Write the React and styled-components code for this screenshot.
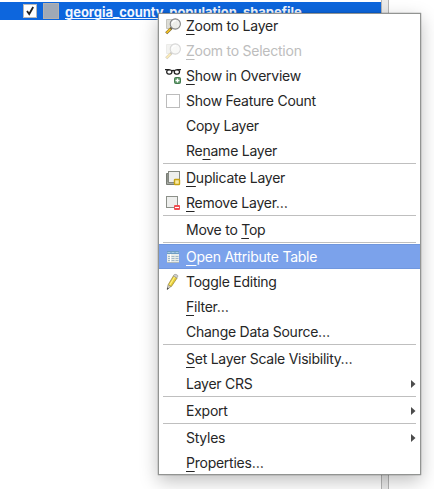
import React from "react";
import styled, { createGlobalStyle, css } from "styled-components";

const GlobalStyle = createGlobalStyle`
  * { box-sizing: border-box; }
  body { margin: 0; background: #fff; overflow: hidden; }
`;

const Screen = styled.main`
  position: relative;
  display: grid;
  grid-template-columns: 381px 8px 1fr;
  width: 434px;
  height: 489px;
  overflow: hidden;
  background: #fff;
  font-family: Inter, "Liberation Sans", sans-serif;
`;

const LayerPanel = styled.section`
  padding-top: 2px;
`;

const Splitter = styled.div`
  background: #ebebeb;
  border: solid #b5b5b5;
  border-width: 0 1px;
`;

const LayerRow = styled.div`
  display: flex;
  align-items: center;
  height: 18px;
  padding-left: 23px;
  background: #0d66dd;
`;

const LayerCheck = styled.span`
  display: flex;
  width: 14px;
  height: 14px;
  background: #fff;
  border: 1px solid #b9b9b9;
`;

const Swatch = styled.span`
  width: 16px;
  height: 16px;
  margin-left: 6px;
  background: #a0a9b6;
  border: 1px solid #b5b1ad;
`;

const LayerName = styled.span`
  margin-left: 6px;
  padding-top: 2px;
  color: #f2f7ff;
  font-size: 13px;
  font-weight: 700;
  line-height: 18px;
  letter-spacing: -0.03px;
  white-space: nowrap;
  text-decoration: underline;
  text-decoration-thickness: 1px;
  text-underline-offset: 1px;
  text-decoration-skip-ink: none;
`;

const Menu = styled.div`
  position: absolute;
  top: 13px;
  left: 158px;
  width: 263px;
  height: 462px;
  background: #fff;
  border: 1px solid #929492;
  box-shadow: 0 6px 17px rgba(0, 0, 0, 0.25), 0 0 1px rgba(0, 0, 0, 0.55);
`;

const Items = styled.div`
  display: flex;
  flex-direction: column;
  margin-top: -1px;
`;

const Item = styled.div`
  display: flex;
  align-items: center;
  height: 25px;
  padding: 0 5px 0 6px;
  color: #262626;
  font-size: 14px;
  line-height: 25px;
  letter-spacing: -0.25px;
  ${(p) => p.$disabled && css`color: #bdbdbd;`}
  ${(p) => p.$active && css`
    color: #fff;
    background: #7ba2eb;
    border: solid #7097de;
    border-width: 1px 0;
  `}
`;

const IconSlot = styled.span`
  display: flex;
  flex: 0 0 21px;
  height: 18px;
  opacity: ${(p) => (p.$disabled ? 0.32 : 1)};
`;

const Label = styled.span`
  flex: 1;
  white-space: nowrap;
`;

const Drawing = styled.svg`
  display: block;
  flex: none;
  overflow: visible;
`;

const Mnemonic = styled.span`
  text-decoration: underline;
  text-decoration-thickness: 1px;
  text-underline-offset: 3px;
  text-decoration-skip-ink: none;
`;

const Separator = styled.div`
  height: 2px;
  margin: 0 4px;
  border-top: 1px solid #bfbfbf;
`;

const Magnifier = () => (
  <Drawing width="18" height="18">
    <path d="M1.5 2.5h10v9h-10z" fill="#ddddd6" stroke="#c5c5be" />
    <path d="M6.8 10.8 1.2 16.3" stroke="#6e6240" strokeWidth="2.8" />
    <path d="M5.4 12 1.5 15.9" stroke="#eebc20" strokeWidth="2" />
    <circle cx="10.3" cy="7" r="5.1" fill="#eeeeea" fillOpacity=".92" stroke="#858585" strokeWidth="1.1" />
    <path d="M7.2 6.5a3.3 3.3 0 0 1 4-2.8" fill="none" stroke="#fff" strokeWidth="1.3" />
  </Drawing>
);

const Glasses = () => (
  <Drawing width="18" height="18">
    <g fill="none" stroke="#222" strokeWidth="1.3">
      <rect x="1.7" y="2.8" width="5.2" height="4.4" rx="2.1" />
      <rect x="9.3" y="2.8" width="5.2" height="4.4" rx="2.1" />
      <path d="M0 2.7h4.5M11.7 2.7h4.3M6.6 4q1.5-1 3 0" />
    </g>
    <rect x="9.5" y="10.5" width="6" height="6" rx="1" fill="#5d9668" stroke="#447d50" />
    <path d="M12.5 11.5v4M10.5 13.5h4" stroke="#fff" strokeWidth="1.3" />
  </Drawing>
);

const EmptyCheck = () => (
  <Drawing width="18" height="18">
    <rect x="1.5" y="2.5" width="13" height="13" fill="#fff" stroke="#bcbcbc" />
  </Drawing>
);

const Duplicate = () => (
  <Drawing width="18" height="18">
    <path d="M3 4.5H1.5v11h10.5V13H3z" fill="#a8aba5" stroke="#777b73" />
    <rect x="3.5" y="2.5" width="11" height="11" fill="#eeefed" stroke="#858981" />
    <rect x="9.5" y="10.5" width="5" height="5" rx=".6" fill="#f8eaa5" stroke="#c6a315" strokeWidth="1.4" />
  </Drawing>
);

const Remove = () => (
  <Drawing width="18" height="18">
    <rect x="1.5" y="2.5" width="11" height="11" fill="#eeefed" stroke="#8c9089" />
    <rect x="9" y="11" width="6" height="5" rx="1" fill="#f04f53" />
    <path d="M10 13.5h4" stroke="#fff" />
  </Drawing>
);

const Table = () => (
  <Drawing width="18" height="18">
    <rect x="2" y="3" width="12" height="12" fill="#e8ece8" />
    <path d="M2 3h12v3H2z" fill="#6d9cc4" />
    <path d="M2.5 4.5h3m1 0h3m1 0h3" stroke="#a8cbe4" />
    <path d="M3 8.5h2m1.5 0h3m1 0h3M3 10.5h2m1.5 0h3m1 0h3M3 12.5h2m1.5 0h3m1 0h3" stroke="#a1b8c8" />
    <path d="M5.5 6v9" stroke="#fff" />
    <path d="M2 14.5h12" stroke="#aeb9bc" />
  </Drawing>
);

const Pencil = () => (
  <Drawing width="18" height="18">
    <path d="m3.2 11.5-1 5 4-3.2" fill="#ddd8c8" stroke="#77766e" strokeWidth=".7" />
    <path d="m3.4 11.3 5-8.4 3.8 2-5.8 8.6-2-.8z" fill="#e7ce35" stroke="#94813c" strokeWidth=".7" />
    <path d="m4.8 11.9 5-8.2" stroke="#fff184" strokeWidth="1.1" />
    <path d="m8.3 2.9 1-1.4q1.6-.7 3.4.9l.1.9-1 1.6z" fill="#cfcfcb" stroke="#90908c" strokeWidth=".6" />
    <path d="m2 16.7.4-2.2 1.4 1z" fill="#373737" />
  </Drawing>
);

const Arrow = () => (
  <Drawing width="4" height="8">
    <path d="M0 0 4.5 4 0 8z" fill="#4c4c4c" />
  </Drawing>
);

const items = [
  { label: "Zoom to Layer", key: 0, icon: Magnifier },
  { label: "Zoom to Selection", key: 0, icon: Magnifier, disabled: true },
  { label: "Show in Overview", key: 0, icon: Glasses },
  { label: "Show Feature Count", icon: EmptyCheck },
  { label: "Copy Layer" },
  { label: "Rename Layer", key: 2 },
  null,
  { label: "Duplicate Layer", key: 0, icon: Duplicate },
  { label: "Remove Layer…", key: 0, icon: Remove },
  null,
  { label: "Move to Top", key: 8 },
  null,
  { label: "Open Attribute Table", key: 0, icon: Table, active: true },
  { label: "Toggle Editing", icon: Pencil },
  { label: "Filter…", key: 0 },
  { label: "Change Data Source…" },
  null,
  { label: "Set Layer Scale Visibility…", key: 0 },
  { label: "Layer CRS", submenu: true },
  null,
  { label: "Export", submenu: true },
  null,
  { label: "Styles", submenu: true },
  { label: "Properties…", key: 0 },
];

function MenuItem({ item }) {
  const Icon = item.icon;
  const { label, key } = item;
  return (
    <Item $active={item.active} $disabled={item.disabled}>
      <IconSlot $disabled={item.disabled}>{Icon && <Icon />}</IconSlot>
      <Label>
        {key === undefined ? label : (
          <>{label.slice(0, key)}<Mnemonic>{label[key]}</Mnemonic>{label.slice(key + 1)}</>
        )}
      </Label>
      {item.submenu && <Arrow />}
    </Item>
  );
}

export default function App() {
  return (
    <Screen>
      <GlobalStyle />
      <LayerPanel>
        <LayerRow>
          <LayerCheck>
            <Drawing width="12" height="12">
              <path d="m3 6 2.2 3L9.2 2" fill="none" stroke="#222" strokeWidth="1.8" />
            </Drawing>
          </LayerCheck>
          <Swatch />
          <LayerName>georgia_county_population_shapefile</LayerName>
        </LayerRow>
      </LayerPanel>
      <Splitter />
      <Menu>
        <Items>
          {items.map((item, i) => item ? <MenuItem key={i} item={item} /> : <Separator key={i} />)}
        </Items>
      </Menu>
    </Screen>
  );
}
